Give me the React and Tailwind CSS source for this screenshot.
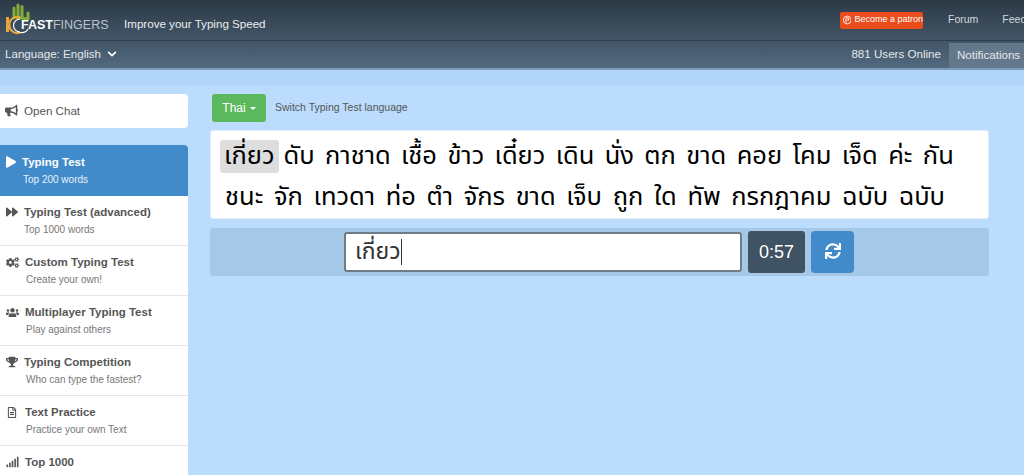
import React from "react";
import { FaBullhorn, FaPlay, FaForward, FaCogs, FaUsers, FaTrophy, FaRegFileAlt, FaSignal, FaSync, FaChevronDown } from "react-icons/fa";

const nav = [
  { icon: FaPlay, cls: "text-[12px] w-[10px]", gap: "gap-[6px]", title: "Typing Test", sub: "Top 200 words", subCls: "pl-[17px]", active: true },
  { icon: FaForward, cls: "text-[12px] w-[12px]", gap: "gap-[6px]", title: "Typing Test (advanced)", sub: "Top 1000 words", subCls: "pl-[18px]" },
  { icon: FaCogs, cls: "text-[13px] w-[13px]", gap: "gap-[6px]", title: "Custom Typing Test", sub: "Create your own!", subCls: "pl-[20px]" },
  { icon: FaUsers, cls: "text-[13px] w-[13px]", gap: "gap-[6px]", title: "Multiplayer Typing Test", sub: "Play against others", subCls: "pl-[20px]" },
  { icon: FaTrophy, cls: "text-[12px] w-[12px]", gap: "gap-[6px]", title: "Typing Competition", sub: "Who can type the fastest?", subCls: "pl-[20px]" },
  { icon: FaRegFileAlt, cls: "text-[11px] w-[12px]", gap: "gap-[7px]", title: "Text Practice", sub: "Practice your own Text", subCls: "pl-[20px]" },
  { icon: FaSignal, cls: "text-[12px] w-[13px]", gap: "gap-[6px]", title: "Top 1000", sub: "", subCls: "" },
];

const line1 = ["ดับ", "กาชาด", "เชื้อ", "ข้าว", "เดี๋ยว", "เดิน", "นั่ง", "ตก", "ขาด", "คอย", "โคม", "เจ็ด", "ค่ะ", "กัน"];
const line2 = "ชนะ จัก เทวดา ท่อ ตำ จักร ขาด เจ็บ ถูก ใด ทัพ กรกฎาคม ฉบับ ฉบับ";

function Logo() {
  return (
    <div className="relative w-[110px] h-[41px] shrink-0">
      <svg width="34" height="41" viewBox="0 0 34 41" className="absolute left-0 top-0">
        <path d="M14 17V8M18 16V5M22 17V6.5M28 19V13" stroke="#86ad3a" strokeWidth="3" strokeLinecap="round" fill="none" />
        <path d="M14 17L28 19" stroke="#86ad3a" strokeWidth="3" fill="none" />
        <rect x="6" y="17" width="3" height="15" fill="#e5a63f" />
        <path d="M20 17.5A8 8 0 1 0 20 32.5" stroke="#e5a63f" strokeWidth="2.2" fill="none" />
        <path d="M20 19A6.5 6.5 0 0 0 20 32" stroke="#fff" strokeWidth="1.2" fill="none" />
        <path d="M20 32.5C24 33 27 31 28 29" stroke="#fff" strokeWidth="1.2" fill="none" />
      </svg>
      <span className="absolute left-[21px] top-[17px] text-[12.5px] leading-[16px] font-bold text-white whitespace-nowrap">
        FAST<span className="font-normal text-[#b9c3cc]">FINGERS</span>
      </span>
    </div>
  );
}

export default function App() {
  return (
    <div className="h-[475px] w-[1024px] overflow-hidden bg-[#bbdcfd] font-['Liberation_Sans',sans-serif] text-[#333]">
      <header className="h-[70px] bg-gradient-to-b from-[#2c3a46] to-[#53697f] border-b-[2px] border-[#7f9bb6] flex flex-col">
        <div className="h-[41px] flex items-center border-b border-[#2f3e4c] shrink-0">
          <Logo />
          <span className="ml-[14px] mt-[7px] text-[11.6px] text-[#e9edf0] whitespace-nowrap">Improve your Typing Speed</span>
          <div className="ml-auto flex items-center text-[10.5px] text-[#d3d9df] whitespace-nowrap w-[184px] shrink-0 overflow-hidden">
            <span className="flex items-center h-[17px] w-[83px] shrink-0 rounded-[2px] bg-[#ea4c1c] text-white text-[9px] pl-[3px] gap-[3px]">
              <svg width="10" height="10" viewBox="0 0 10 10"><circle cx="5" cy="5" r="4.6" fill="none" stroke="#fff" strokeWidth="1" /><path d="M3.5 8V3.8a1.6 1.6 0 1 1 1.6 1.6" stroke="#fff" strokeWidth="1.2" fill="none" /></svg>
              Become a patron
            </span>
            <span className="ml-[25px]">Forum</span>
            <span className="ml-[24px]">Feedback</span>
          </div>
        </div>
        <div className="flex-1 flex items-stretch pl-[5px] text-[11.6px] text-[#e3e8ec]">
          <span className="flex items-center whitespace-nowrap pb-[1px]">Language: English<FaChevronDown className="ml-[6px] text-[10px] text-white" /></span>
          <span className="ml-auto flex items-center pb-[1px] whitespace-nowrap">881 Users Online</span>
          <span className="ml-[8px] mt-[2px] w-[75px] pl-[8px] pb-[1px] flex items-center bg-[#64788b] whitespace-nowrap overflow-hidden">Notifications</span>
        </div>
      </header>
      <div className="h-[15px] bg-[#b0d5f9]" />
      <div className="flex items-start">
        <aside className="w-[188px] shrink-0 pt-[9px]">
          <div className="h-[34px] bg-white rounded-r-[4px] flex items-center pl-[5px] pb-[1px] text-[11.6px] text-[#555] gap-[6px]">
            <FaBullhorn className="text-[13px] text-[#555]" />
            <span>Open Chat</span>
          </div>
          <nav className="mt-[17px] bg-white rounded-r-[4px]">
            {nav.map((n) => {
              const Icon = n.icon;
              return (
                <div key={n.title} className={`border-b ${n.active ? "h-[51px] pl-[6px] pt-[9px] bg-[#428bca] text-white border-[#428bca] rounded-tr-[4px]" : "h-[50px] pl-[6px] pt-[8px] border-[#e6e6e6] text-[#555]"}`}>
                  <div className={`flex items-center ${n.gap} text-[11.5px] leading-[16px] font-bold`}>
                    <Icon className={`${n.cls} shrink-0`} />
                    <span className="whitespace-nowrap">{n.title}</span>
                  </div>
                  <div className={`${n.subCls} mt-[2px] text-[10px] leading-[16px] whitespace-nowrap ${n.active ? "text-[#e8f1f9]" : "text-[#777]"}`}>{n.sub}</div>
                </div>
              );
            })}
          </nav>
        </aside>
        <main className="ml-[22px] w-[779px] shrink-0 pt-[9px]">
          <div className="flex items-center h-[28px] pl-[2px]">
            <span className="h-[28px] w-[54px] bg-[#5cb85c] rounded-[3px] text-white text-[12px] flex items-center justify-center gap-[4px]">
              Thai<span className="w-0 h-0 border-x-[3px] border-x-transparent border-t-[3px] border-t-white" />
            </span>
            <span className="ml-[9px] text-[10.5px] text-[#555]">Switch Typing Test language</span>
          </div>
          <div className="mt-[8px] h-[89px] bg-white rounded-[3px] border border-[#e2f0fd] pl-[9px] pr-[2px] pt-[5px] text-[25.5px] leading-[41px] text-black font-['Noto_Sans_Thai','Noto_Sans',sans-serif] overflow-hidden">
            <div className="flex items-center h-[41px] gap-[5px] whitespace-nowrap [word-spacing:3.75px]">
              <span className="h-[33px] leading-[33px] px-[4px] bg-[#dddddd] rounded-[3px]">เกี่ยว</span>
              <span>{line1.join(" ")}</span>
            </div>
            <div className="h-[41px] pl-[5px] whitespace-nowrap [word-spacing:4px]">{line2}</div>
          </div>
          <div className="mt-[9px] h-[48px] bg-[#a6c8e8] rounded-[3px] flex items-center pl-[134px] gap-[6px]">
            <div className="w-[398px] h-[40px] bg-white rounded-[3px] border-2 border-[#6f7d89] flex items-center pl-[9px] text-[23px] text-[#333] font-['Noto_Sans_Thai','Noto_Sans',sans-serif]">
              เกี่ยว<span className="w-px h-[26px] bg-[#333]" />
            </div>
            <div className="w-[57px] h-[42px] bg-[#3f5364] rounded-[3px] text-white text-[18px] flex items-center justify-center">0:57</div>
            <div className="w-[43px] h-[42px] bg-[#428bca] rounded-[4px] text-white flex items-center justify-center"><FaSync className="text-[16px] -mt-[2px]" /></div>
          </div>
        </main>
      </div>
    </div>
  );
}
